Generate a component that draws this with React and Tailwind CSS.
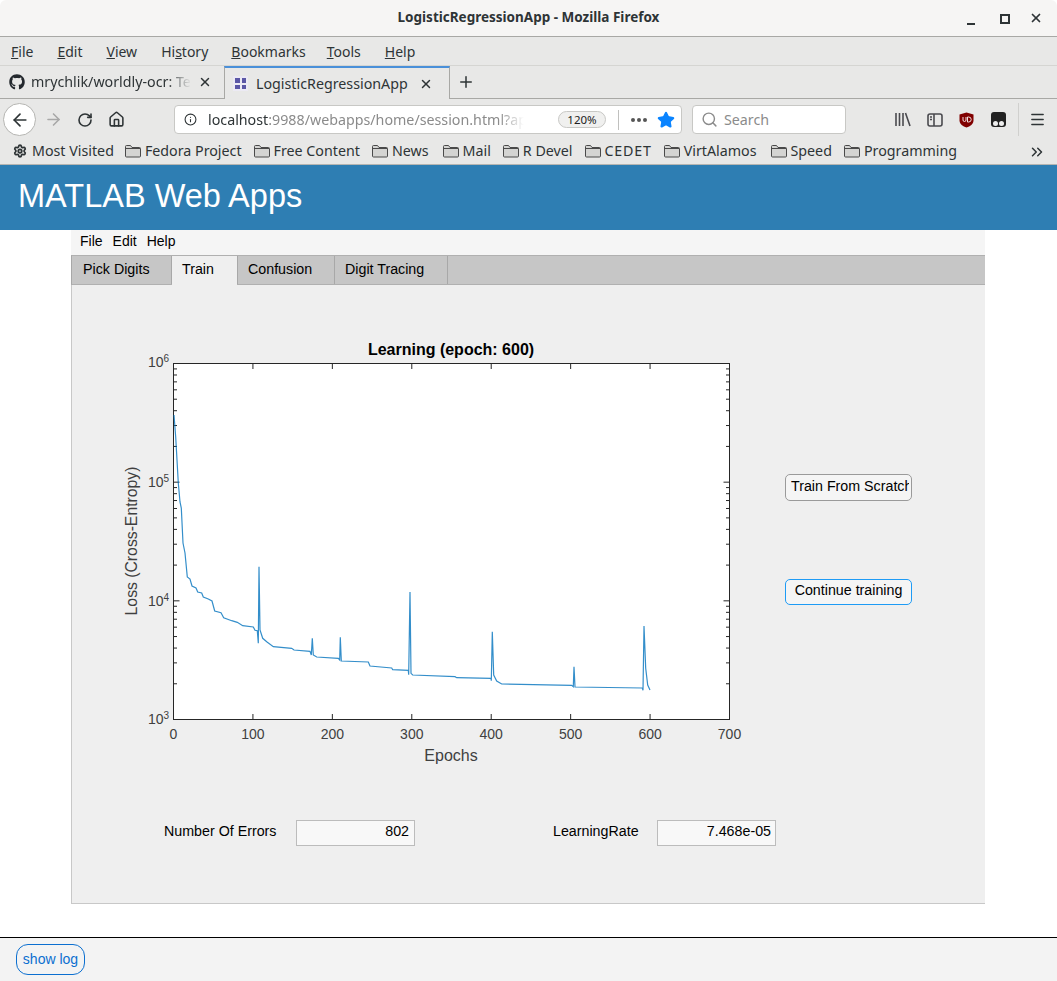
import React from "react";
import { ArrowLeft, ArrowRight, RotateCw, Home, Info, Search, X, Plus, Star, Settings, Menu, ChevronsRight } from "lucide-react";
import { FaGithub } from "react-icons/fa";

const uiFont = { fontFamily: '"Noto Sans", sans-serif' };

// spacing in the reference isn't even, so each folder keeps its own margin
const bookmarks = [
  { name: "Fedora Project", cls: "ml-[11px]" },
  { name: "Free Content", cls: "ml-[12px]" },
  { name: "News", cls: "ml-[12px]" },
  { name: "Mail", cls: "ml-[14px]" },
  { name: "R Devel", cls: "ml-[12px]" },
  { name: "CEDET", cls: "ml-[12px]", text: "tracking-[0.8px]" },
  { name: "VirtAlamos", cls: "ml-[12px]" },
  { name: "Speed", cls: "ml-[14px]" },
  { name: "Programming", cls: "ml-[12px]" },
];

const curve = [
  [174, 415], [175.7, 437], [178.3, 483], [180, 502], [181.3, 508], [183, 543], [185, 553], [187.3, 577],
  [190, 579], [192, 586], [196, 588], [197.7, 592], [201.7, 593], [203.3, 597], [208.3, 599], [212, 601],
  [214.7, 611], [221, 612.7], [223.7, 617.7], [231.7, 620.7], [237.3, 622.3], [242.7, 625.7], [253.3, 627],
  [255, 630.3], [257.3, 630.7], [258.3, 643.3], [259, 566.7], [260, 630], [262.7, 638.3], [266.7, 641.7],
  [273.3, 646.7], [291.7, 648.3], [294, 650], [310, 651.3], [311.3, 655], [312.3, 638.3], [313.3, 655],
  [316.7, 657], [338.3, 658.3], [339.7, 660], [340.3, 637.3], [341.3, 661], [368.3, 662], [370, 666],
  [391.7, 668], [392.7, 669.7], [408.3, 670.3], [408.7, 674.7], [410, 592], [411, 673.3], [412.7, 675],
  [455, 676.7], [456.7, 677.7], [491, 678.3], [491.3, 680.7], [492.3, 631.7], [493.7, 675], [496.7, 681],
  [501.7, 684], [571.7, 685.3], [573.3, 686.7], [574, 666.7], [575, 687], [642.3, 688], [643, 690.3],
  [644, 626], [645.7, 668.3], [647.7, 685], [650, 690],
];

const Folder = () => (
  <svg width="16" height="14" viewBox="0 0 16 14" className="shrink-0">
    <path d="M0.5 12V2.5a1 1 0 0 1 1-1h4l1.5 2h7.5a1 1 0 0 1 1 1V12a1 1 0 0 1-1 1h-13a1 1 0 0 1-1-1z" fill="#d4d4d2" stroke="#4a4a4a" />
    <path d="M1 4.5h14" stroke="#4a4a4a" />
  </svg>
);

const Chart = () => {
  const logTicks = [];
  for (let d = 0; d < 3; d++) {
    for (let m = 1; m < 10; m++) {
      logTicks.push({ y: 719.5 - 118.67 * (d + Math.log10(m)), major: m === 1 });
    }
  }
  const xTicks = [0, 100, 200, 300, 400, 500, 600, 700];
  const xPos = (v) => 173.5 + (v * 556) / 700;

  return (
    <svg width="660" height="445" viewBox="110 335 660 445" className="block shrink-0 ml-[38px]" style={{ fontFamily: '"Liberation Sans", sans-serif' }}>
      <rect x="173.5" y="363.5" width="556" height="356" fill="#fff" stroke="#262626" />
      {logTicks.map((t, i) => (
        <g key={i} stroke="#262626">
          <line x1="173.5" x2={t.major ? 179.5 : 177} y1={t.y} y2={t.y} />
          <line x1="729.5" x2={t.major ? 723.5 : 726} y1={t.y} y2={t.y} />
        </g>
      ))}
      {xTicks.map((v) => (
        <g key={v} stroke="#262626">
          <line x1={xPos(v)} x2={xPos(v)} y1="719.5" y2="714" />
          <line x1={xPos(v)} x2={xPos(v)} y1="363.5" y2="369" />
          <text x={xPos(v)} y="739" textAnchor="middle" fontSize="14" fill="#404040" stroke="none">{v}</text>
        </g>
      ))}
      {[[6, 367], [5, 487], [4, 606], [3, 724]].map(([p, y]) => (
        <text key={p} x="148" y={y} fontSize="14" fill="#404040">
          10<tspan fontSize="10" dy="-5">{p}</tspan>
        </text>
      ))}
      <polyline points={curve.map((p) => p.join(",")).join(" ")} fill="none" stroke="#0072bd" strokeWidth="1.2" opacity="0.8" />
      <text x="451" y="355" textAnchor="middle" fontSize="16" fontWeight="700" fill="#000">Learning (epoch: 600)</text>
      <text x="451" y="761" textAnchor="middle" fontSize="16" fill="#404040">Epochs</text>
      <text transform="translate(137 541) rotate(-90)" textAnchor="middle" fontSize="15.75" fill="#404040">Loss (Cross-Entropy)</text>
    </svg>
  );
};

const App = () => {
  return (
    <div className="w-[1057px] h-[981px] flex flex-col overflow-hidden bg-white text-[#2e3436]" style={uiFont}>
      {/* window title */}
      <div className="relative h-[37px] shrink-0 bg-[#f6f5f4] border-b border-[#a8a8a5] rounded-t-md flex items-center justify-center">
        <span className="text-[13.5px] font-bold mt-[-2px]">LogisticRegressionApp - Mozilla Firefox</span>
        <div className="absolute right-[14px] top-[11px] flex items-center">
          <div className="w-[8px] h-[2px] bg-[#2e3436] mt-[11px]" />
          <div className="ml-[25px] w-[10px] h-[10px] border-2 border-[#2e3436] mt-[1px]" />
          <X size={14} strokeWidth={3} className="ml-[19px]" />
        </div>
      </div>

      {/* firefox menu */}
      <div className="h-[29px] shrink-0 bg-[#e8e8e7] border-b border-[#d5d5d2] flex items-center pl-[11px] gap-[24px] text-[14px]">
        <span><span className="underline">F</span>ile</span>
        <span><span className="underline">E</span>dit</span>
        <span><span className="underline">V</span>iew</span>
        <span>Hi<span className="underline">s</span>tory</span>
        <span className="-ml-[1px]"><span className="underline">B</span>ookmarks</span>
        <span className="-ml-[3px]"><span className="underline">T</span>ools</span>
        <span><span className="underline">H</span>elp</span>
      </div>

      {/* tabs */}
      <div className="h-[33px] shrink-0 bg-[#e8e8e7] border-b border-[#a8a8a5] flex items-stretch text-[14.25px]">
        <div className="w-[224px] flex items-center pl-[9px] overflow-hidden">
          <FaGithub size={16} className="shrink-0 text-[#24292e]" />
          <span className="ml-[6px] w-[160px] whitespace-nowrap overflow-hidden [mask-image:linear-gradient(to_right,black_85%,transparent)]">mrychlik/worldly-ocr: Text</span>
          <X size={14} strokeWidth={2.5} className="ml-[7px] shrink-0" />
        </div>
        <div className="w-[226px] mb-[-1px] bg-[#e8e8e7] border-t-2 border-t-[#4a90d9] border-x border-x-[#a8a8a5] flex items-center pl-[8px]">
          <div className="w-[15px] h-[15px] bg-[#eceaf4] grid grid-cols-2 gap-[2px] p-[2px] shrink-0">
            <span className="bg-[#5b57a6]" /><span className="bg-[#5b57a6]" /><span className="bg-[#5b57a6]" /><span className="bg-[#5b57a6]" />
          </div>
          <span className="ml-[8px] w-[163px] whitespace-nowrap">LogisticRegressionApp</span>
          <X size={14} strokeWidth={2.5} className="shrink-0" />
        </div>
        <Plus size={18} strokeWidth={2} className="self-center ml-[7px]" />
      </div>

      {/* nav bar */}
      <div className="h-[41px] shrink-0 bg-[#e8e8e7] flex items-center pl-[3px]">
        <div className="w-[33px] h-[33px] rounded-full bg-white border border-[#b5b5b2] flex items-center justify-center">
          <ArrowLeft size={20} strokeWidth={2} />
        </div>
        <ArrowRight size={19} strokeWidth={2} className="ml-[8px] text-[#a8a8a8]" />
        <RotateCw size={16} strokeWidth={2.4} className="ml-[14px]" />
        <Home size={17} strokeWidth={2.2} className="ml-[15px]" />
        <div className="ml-[49px] w-[508px] h-[29px] bg-white border border-[#c8c8c5] rounded-[4px] flex items-center pl-[8px] text-[14.25px]">
          <Info size={13} strokeWidth={2} className="shrink-0 ml-[1px]" />
          <div className="ml-[11px] w-[316px] whitespace-nowrap overflow-hidden [mask-image:linear-gradient(to_right,black_92%,transparent)]">
            localhost<span className="text-[#8b8b8b]">:9988/webapps/home/session.html?app</span>
          </div>
          <span className="ml-[34px] w-[48px] h-[17px] rounded-full bg-[#f0f0ef] border border-[#c8c8c5] flex items-center justify-center text-[11.5px] text-[#222]">120%</span>
          <div className="ml-[12px] w-px h-[20px] bg-[#c0c0be]" />
          <div className="ml-[12px] flex gap-[2px]">
            <span className="w-[4px] h-[4px] rounded-full bg-[#555]" />
            <span className="w-[4px] h-[4px] rounded-full bg-[#555]" />
            <span className="w-[4px] h-[4px] rounded-full bg-[#555]" />
          </div>
          <Star size={18} className="ml-[10px] text-[#0a84ff] fill-[#0a84ff]" />
        </div>
        <div className="ml-[10px] w-[154px] h-[29px] bg-white border border-[#c8c8c5] rounded-[4px] flex items-center pl-[8px] text-[14.25px] text-[#8b8b8b]">
          <Search size={17} strokeWidth={2} />
          <span className="ml-[6px]">Search</span>
        </div>
        <div className="ml-[49px] flex items-center">
          <svg width="16" height="15" viewBox="0 0 16 15" fill="none" stroke="#4a4a4f" strokeWidth="1.6">
            <path d="M1 1v13M4.5 1v13M8 1v13M10.5 1l4.5 13" />
          </svg>
          <svg width="16" height="14" viewBox="0 0 16 14" fill="none" stroke="#4a4a4f" strokeWidth="1.6" className="ml-[16px]">
            <rect x="1" y="1" width="14" height="12" rx="2" />
            <path d="M7 1v12M3 4h2M3 6.5h2" />
          </svg>
          <svg width="15" height="16" viewBox="0 0 15 16" className="ml-[16px]">
            <path d="M7.5 0.5l7 2v6c0 3.5-3.5 6-7 7-3.5-1-7-3.5-7-7v-6z" fill="#800000" />
            <path d="M4 5v3a1.5 1.5 0 0 0 3 0V5M8.5 5v5h1.2a2.5 2.5 0 0 0 0-5z" fill="none" stroke="#f2dede" strokeWidth="1" />
          </svg>
          <div className="ml-[17px] relative w-[15px] h-[15px] rounded-[3px] bg-[#222]">
            <span className="absolute left-[2px] bottom-[1px] w-[5px] h-[5px] rounded-full bg-[#eee]" />
            <span className="absolute right-[2px] bottom-[1px] w-[5px] h-[5px] rounded-full bg-[#eee]" />
          </div>
          <div className="ml-[12px] w-px h-[33px] bg-[#d0d0ce]" />
          <Menu size={17} strokeWidth={2} className="ml-[10px]" />
        </div>
      </div>

      {/* bookmarks */}
      <div className="relative h-[25px] shrink-0 bg-[#e8e8e7] border-b border-[#b5b5b2] flex items-center pl-[13px] pb-[3px] text-[14.25px] whitespace-nowrap">
        <Settings size={14} strokeWidth={3} className="shrink-0" />
        <span className="ml-[5px]">Most Visited</span>
        {bookmarks.map((b) => (
          <div key={b.name} className={`flex items-center ${b.cls}`}>
            <Folder />
            <span className={`ml-[4px] ${b.text || ""}`}>{b.name}</span>
          </div>
        ))}
        <ChevronsRight size={18} strokeWidth={2} className="absolute right-[11px] top-[3px]" />
      </div>

      {/* page header */}
      <div className="h-[65px] shrink-0 bg-[#2e7eb3] flex items-center pl-[18px] pb-[3px]">
        <h1 className="text-[32.5px] text-white" style={{ fontFamily: '"Liberation Sans", sans-serif' }}>MATLAB Web Apps</h1>
      </div>

      {/* matlab app */}
      <div className="flex-1 min-h-0 pl-[71px]" style={{ fontFamily: '"Liberation Sans", sans-serif' }}>
        <div className="w-[914px] text-[14.25px] text-black">
          <div className="h-[25px] bg-[#f5f5f5] flex items-center gap-[10px] pl-[9px] pb-[2px] text-[14px]">
            <span>File</span>
            <span>Edit</span>
            <span>Help</span>
          </div>
          <div className="h-[30px] bg-[#c6c6c6] border-t border-t-[#b0b0b0] border-b border-b-[#b0b0b0] border-l border-l-[#a8a8a8] flex items-stretch">
            <div className="w-[100px] border-r border-[#a8a8a8] pl-[11px] pt-[3px]">Pick Digits</div>
            <div className="w-[65px] mb-[-1px] bg-[#efefef] pl-[10px] pt-[3px]">Train</div>
            <div className="w-[98px] border-x border-[#a8a8a8] pl-[10px] pt-[3px]">Confusion</div>
            <div className="w-[113px] border-r border-[#a8a8a8] pl-[10px] pt-[3px]">Digit Tracing</div>
          </div>
          <div className="h-[619px] bg-[#efefef] border-l border-b border-[#c8c8c8] pt-[50px]">
            <div className="flex items-start">
              <Chart />
              <div className="ml-[15px] w-[127px] pt-[139px] flex flex-col gap-[78px]">
                <div className="h-[27px] rounded-[5px] border border-[#9a9a9a] bg-[#f5f5f5] pl-[5px] pr-[2px] flex items-center overflow-hidden whitespace-nowrap">
                  <span className="w-[118px] overflow-hidden mt-[-2px]">Train From Scratch</span>
                </div>
                <div className="h-[26px] rounded-[5px] border border-[#1e9bf5] bg-[#f5f5f5] flex items-center justify-center">
                  <span className="mt-[-3px]">Continue training</span>
                </div>
              </div>
            </div>
            <div className="flex items-center mt-[40px] pl-[92px]">
              <span className="w-[114px] whitespace-nowrap mt-[-2px]">Number Of Errors</span>
              <div className="ml-[18px] w-[119px] h-[26px] bg-[#f8f8f8] border border-[#bcbcbc] text-right pr-[5px] leading-[20px]">802</div>
              <span className="ml-[138px] w-[86px] whitespace-nowrap mt-[-2px]">LearningRate</span>
              <div className="ml-[18px] w-[119px] h-[26px] bg-[#f8f8f8] border border-[#bcbcbc] text-right pr-[4px] leading-[20px]">7.468e-05</div>
            </div>
          </div>
        </div>
      </div>

      {/* log bar */}
      <div className="h-[44px] shrink-0 bg-[#f3f3f3] border-t border-black flex items-center pl-[16px]" style={{ fontFamily: '"Liberation Sans", sans-serif' }}>
        <div className="w-[69px] h-[31px] rounded-[12px] border border-[#0b6fd0] text-[#0b6fd0] text-[14px] flex items-center justify-center">show log</div>
      </div>
    </div>
  );
};

export default App;
